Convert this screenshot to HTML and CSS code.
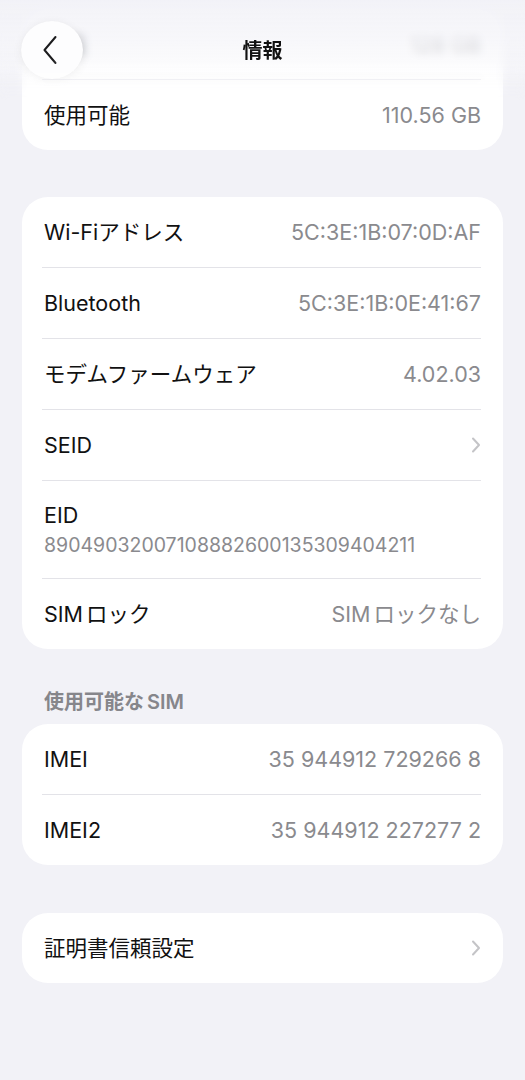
FILE: index.html
```html
<!DOCTYPE html>
<html lang="ja">
<head>
<meta charset="utf-8">
<title>情報</title>
<link rel="stylesheet" href="styles.css">
</head>
<body>
<div class="page">
  <header class="nav">
    <button class="back" aria-label="戻る">
      <svg width="16" height="30" viewBox="0 0 16 30"><path d="M13.5 2 L2.5 15 L13.5 28" fill="none" stroke="#1c1c1e" stroke-width="2" stroke-linecap="round" stroke-linejoin="round"/></svg>
    </button>
    <h1 class="title">情報</h1>
    <span class="spacer"></span>
  </header>

  <main class="content">
    <section class="card">
      <div class="row"><span class="label">容量</span><span class="value">128 GB</span></div>
      <div class="row"><span class="label">使用可能</span><span class="value">110.56 GB</span></div>
    </section>

    <section class="card">
      <div class="row"><span class="label">Wi-Fiアドレス</span><span class="value">5C:3E:1B:07:0D:AF</span></div>
      <div class="row"><span class="label">Bluetooth</span><span class="value">5C:3E:1B:0E:41:67</span></div>
      <div class="row"><span class="label">モデムファームウェア</span><span class="value">4.02.03</span></div>
      <div class="row"><span class="label">SEID</span><svg class="chev" width="10" height="16" viewBox="0 0 10 16"><path d="M2 1.5 L8 8 L2 14.5" fill="none" stroke="#c4c4c7" stroke-width="2" stroke-linecap="round" stroke-linejoin="round"/></svg></div>
      <div class="row tall"><span class="label">EID</span><span class="sub">89049032007108882600135309404211</span></div>
      <div class="row"><span class="label">SIM<span class="gap"></span>ロック</span><span class="value">SIM<span class="gap"></span>ロックなし</span></div>
    </section>

    <h2 class="section-title">使用可能な<span class="gap"></span>SIM</h2>
    <section class="card">
      <div class="row"><span class="label">IMEI</span><span class="value">35 944912 729266 8</span></div>
      <div class="row"><span class="label">IMEI2</span><span class="value">35 944912 227277 2</span></div>
    </section>

    <section class="card spaced">
      <div class="row"><span class="label">証明書信頼設定</span><svg class="chev" width="10" height="16" viewBox="0 0 10 16"><path d="M2 1.5 L8 8 L2 14.5" fill="none" stroke="#c4c4c7" stroke-width="2" stroke-linecap="round" stroke-linejoin="round"/></svg></div>
    </section>
  </main>
</div>
</body>
</html>
```

FILE: styles.css
```css
* { box-sizing: content-box; }
html, body {
  margin: 0;
  padding: 0;
  background: #f2f2f7;
}
body {
  font-family: "Inter", "Noto Sans CJK JP", sans-serif;
  color: #111;
  width: 525px;
  height: 1080px;
  overflow: hidden;
}
.page {
  position: relative;
  width: 525px;
  height: 1080px;
}
.nav {
  position: absolute;
  top: 0;
  left: 0;
  right: 0;
  height: 104px;
  z-index: 2;
  display: grid;
  grid-template-columns: 80px 1fr 80px;
  align-items: start;
  background: linear-gradient(to bottom, rgba(242,242,247,0.9) 0px, rgba(245,245,249,0.78) 40px, rgba(250,250,252,0.45) 72px, rgba(255,255,255,0) 100px);
  -webkit-backdrop-filter: blur(4px);
  backdrop-filter: blur(4px);
  -webkit-mask-image: linear-gradient(to bottom, #000 0px, #000 60px, transparent 100px);
  mask-image: linear-gradient(to bottom, #000 0px, #000 60px, transparent 100px);
}
.back {
  margin: 21px 0 0 21px;
  width: 58px;
  height: 58px;
  border-radius: 50%;
  border: none;
  background: #fdfdfe;
  box-shadow: 0 2px 10px rgba(0,0,0,0.07), 0 0 1px rgba(0,0,0,0.05);
  display: flex;
  align-items: center;
  justify-content: center;
  padding: 0 4px 0 0;
}
.title {
  margin: 37px 0 0;
  text-align: center;
  font-size: 20px;
  font-weight: 700;
  line-height: 28px;
  color: #111;
}
.content {
  padding: 9px 22px 0;
  display: flex;
  flex-direction: column;
}
.card {
  background: #fff;
  border-radius: 26px;
  margin-bottom: 47px;
  overflow: hidden;
}
.row {
  display: flex;
  justify-content: space-between;
  align-items: center;
  height: 70px;
  margin: 0 22px 0 20px;
  padding-left: 2px;
}
.row + .row { border-top: 1px solid #e3e3e8; }
.row.tall {
  height: 97px;
  flex-direction: column;
  align-items: flex-start;
  justify-content: center;
  gap: 4px;
}
.gap {
  display: inline-block;
  width: 3px;
}
.label {
  font-size: 21.5px;
  line-height: 27px;
  color: #111;
}
.value {
  font-size: 21.5px;
  line-height: 27px;
  color: #8a8a8e;
}
.sub {
  font-size: 19.5px;
  line-height: 25px;
  color: #8a8a8e;
}
.section-title {
  margin: -7px 0 9px 22px;
  font-size: 20px;
  line-height: 26px;
  font-weight: 600;
  color: #86868b;
}
.card.spaced { margin-top: 1px; }
```
